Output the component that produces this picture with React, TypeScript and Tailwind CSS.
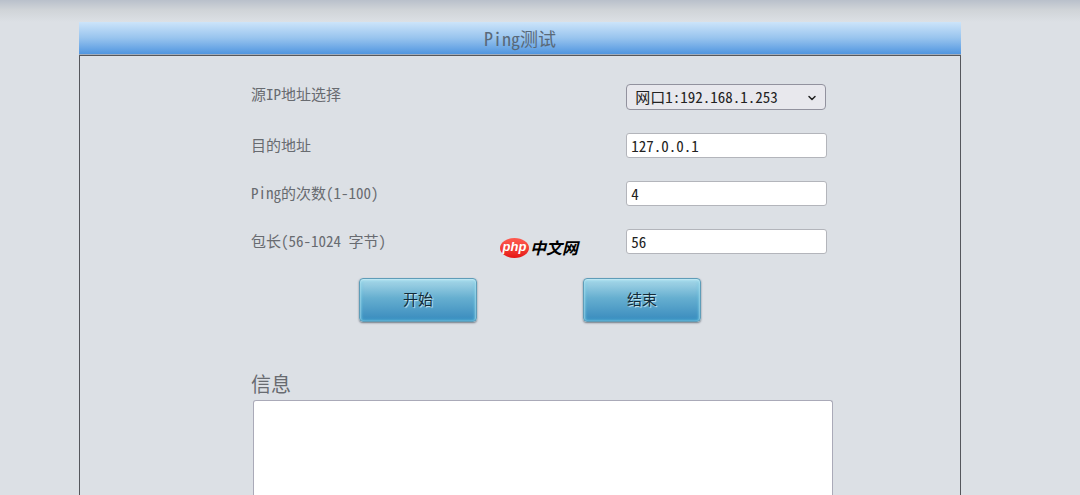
import { useState } from 'react';
import { ChevronDown } from 'lucide-react';

const inputClass =
  'h-[25px] w-[201px] rounded-[3px] border border-[#b3b5bb] bg-white px-1 text-[15px] text-[#222]';
const buttonClass =
  'h-11 w-[118px] rounded border border-[#5f9db8] bg-linear-to-b from-[#a9d9e9] via-[#66afd0] via-45% to-[#378abd] pb-0.5 text-[15px] text-[#102a38] shadow-[inset_0_1px_3px_#d8f3fa,inset_0_0_4px_#55bfdd,0_1px_2px_#707a85] [text-shadow:1px_1px_1px_#d5edf5]';

function Logo() {
  return (
    <div className="absolute top-[181px] left-[420px] flex items-center gap-px">
      <span className="flex h-5 w-[29px] items-center justify-center rounded-[50%] bg-linear-to-b from-[#ff5a50] to-[#e60f12] pb-0.5 font-['Liberation_Sans',sans-serif] text-[13px] leading-5 font-bold text-white italic">
        php
      </span>
      <span className="pb-0.5 font-['Noto_Sans_CJK_SC',sans-serif] text-[16px] leading-5 font-bold text-black italic">
        中文网
      </span>
    </div>
  );
}

export default function App() {
  const [source, setSource] = useState('1');
  const [address, setAddress] = useState('127.0.0.1');
  const [count, setCount] = useState('4');
  const [size, setSize] = useState('56');

  return (
    <div className="flex min-h-screen flex-col bg-[#dce0e5] bg-[linear-gradient(#b9c0cb,#d0d4d8_10px,#dce0e5_22px)] pt-[22px] pr-[119px] pl-[79px] font-['Noto_Sans_CJK_SC',monospace] text-[#686b70] [font-feature-settings:'hwid']">
      <h1 className="flex h-[33px] items-center justify-center border-b border-[#a2adbc] bg-linear-to-b from-[#cce4fa] via-[#98c4ee] to-[#5096e0] text-[18px] leading-6 text-[#596979]">
        Ping测试
      </h1>

      <main className="relative flex flex-1 flex-col border border-b-0 border-[#55575c] pr-[127px] pl-[171px]">
        <form className="flex flex-1 flex-col" onSubmit={(e) => e.preventDefault()}>
          <div className="grid grid-cols-[374fr_206fr] items-center gap-y-[23px] pt-7 text-[15px] leading-5">
            <label htmlFor="source" className="pb-1.5">
              源IP地址选择
            </label>
            <div className="relative w-[200px]">
              <select
                id="source"
                value={source}
                onChange={(e) => setSource(e.target.value)}
                className="block h-[26px] w-full appearance-none rounded border border-[#92929e] bg-[#e8e8ed] px-2 text-[15px] text-[#222]"
              >
                <option value="1">网口1:192.168.1.253</option>
              </select>
              <ChevronDown className="pointer-events-none absolute top-2 right-2 size-3 text-[#222]" strokeWidth={3} />
            </div>

            <label htmlFor="address" className="pb-0.5">
              目的地址
            </label>
            <input id="address" value={address} onChange={(e) => setAddress(e.target.value)} className={inputClass} />

            <label htmlFor="count" className="pb-0.5">
              Ping的次数(1-100)
            </label>
            <input id="count" value={count} onChange={(e) => setCount(e.target.value)} className={inputClass} />

            <label htmlFor="size" className="pb-0.5">
              包长(56-1024 字节)
            </label>
            <input id="size" value={size} onChange={(e) => setSize(e.target.value)} className={inputClass} />
          </div>

          <div className="mt-6 flex gap-[106px] pl-[108px]">
            <button type="submit" className={buttonClass}>
              开始
            </button>
            <button type="button" className={buttonClass}>
              结束
            </button>
          </div>

          <label htmlFor="info" className="mt-12 text-[20px] leading-7">
            信息
          </label>
          <textarea
            id="info"
            readOnly
            className="mt-0.5 ml-0.5 min-h-20 flex-1 resize-none rounded-t-[3px] border border-b-0 border-[#aaaab8] bg-white p-1 text-[15px]"
          />
        </form>
        <Logo />
      </main>
    </div>
  );
}
